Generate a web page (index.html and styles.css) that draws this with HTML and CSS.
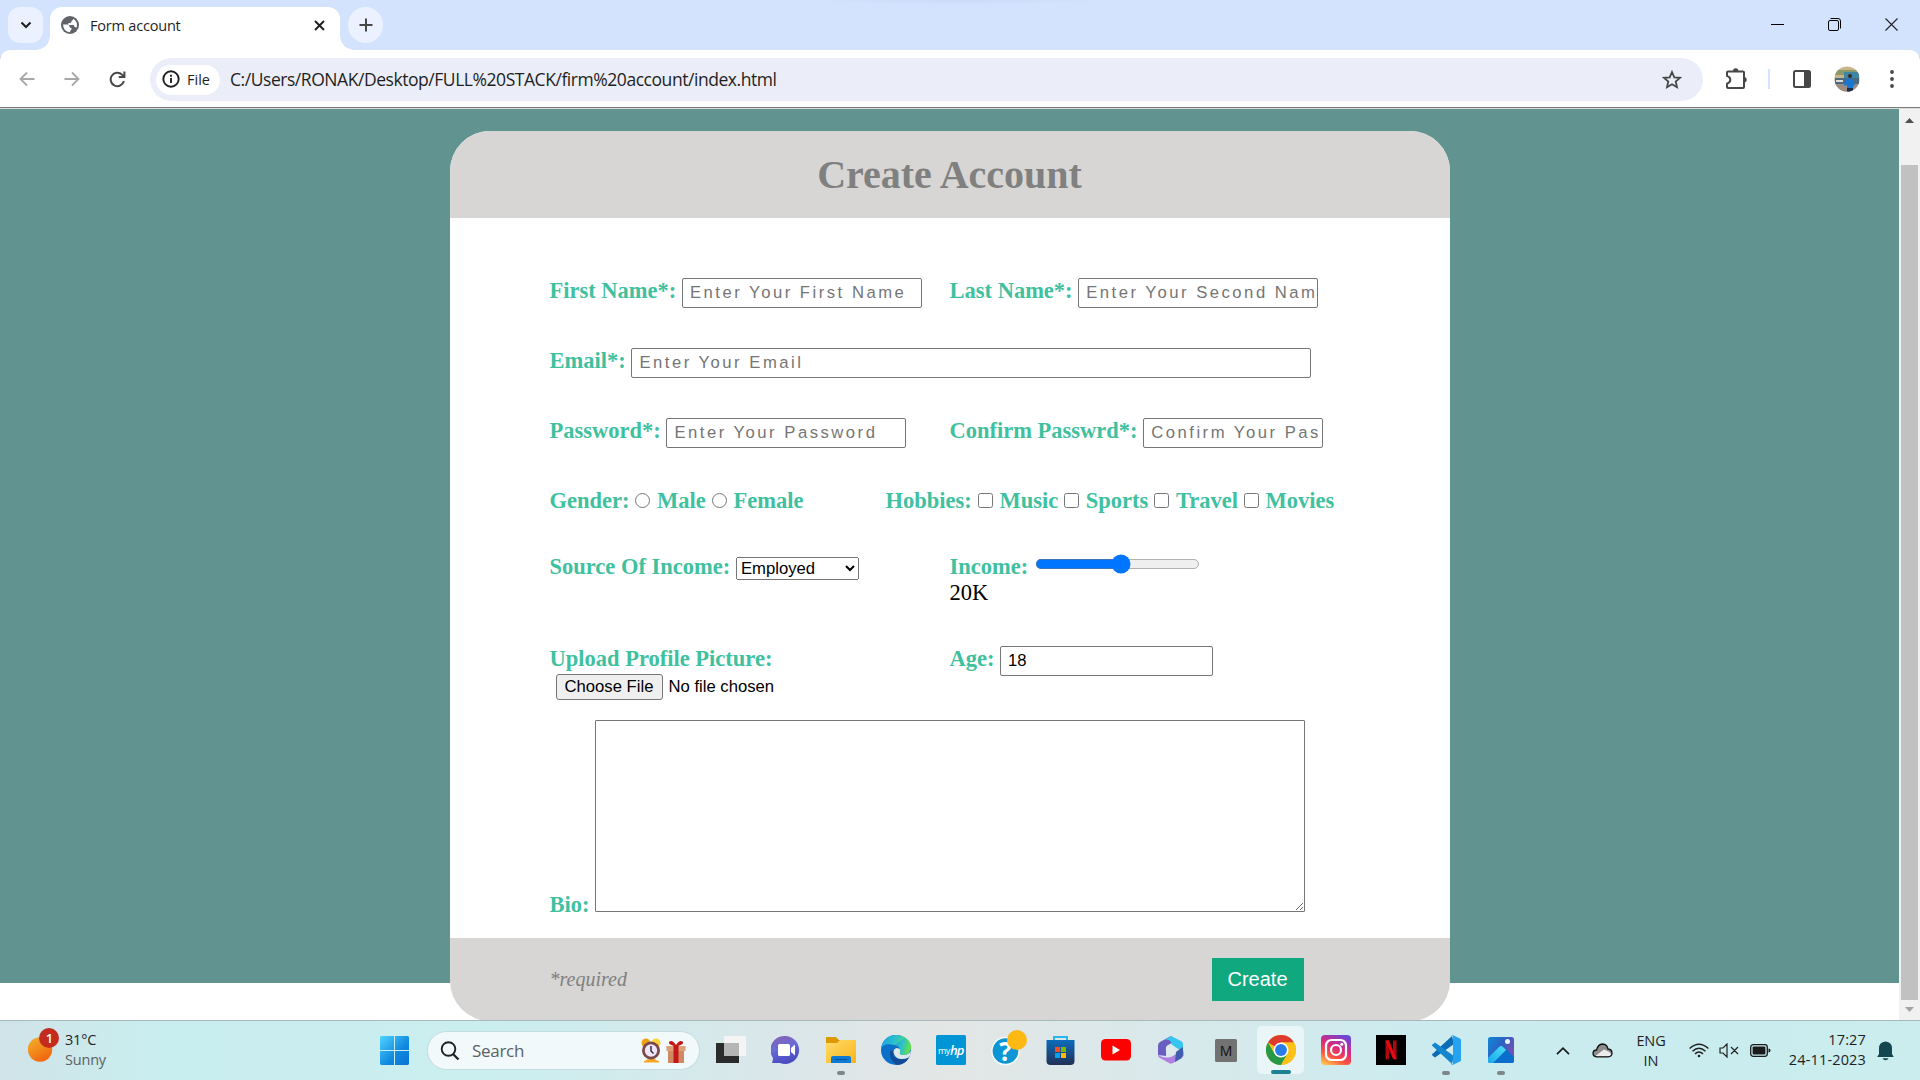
FILE: index.html
```html
<!DOCTYPE html>
<html lang="en">
<head>
<meta charset="utf-8">
<title>Form account</title>
<link rel="stylesheet" href="styles.css">
</head>
<body>
<div class="desktop">
  <header class="tabstrip">
    <div class="tab-search"><svg width="12" height="8" viewBox="0 0 12 8"><path d="M1.5 1.5 6 6l4.500-4.500" fill="none" stroke="#1f1f1f" stroke-width="2"/></svg></div>
    <div class="tab">
      <svg width="18" height="18" viewBox="0 0 18 18"><circle cx="9" cy="9" r="9" fill="#5f6368"/><path d="M2 8.500h4q2.500 0 2.500 2 0 1.500 2 1.500v1.500q-1.500.500-1.500 2.800Q2.500 15.500 2 8.500zM12 2.800Q16 5 16 9q0 1.500-.6 2.700-.5-.7-1.900-.7 0-2-1.500-2H8.500q-1.500 0-1.500-1T8.500 7q2 0 2-1.500T12 4z" fill="#fff"/></svg>
      <span class="tab-title">Form account</span>
      <svg class="tab-close" width="11" height="11" viewBox="0 0 11 11"><path d="M1 1l9 9M10 1l-9 9" stroke="#1f1f1f" stroke-width="1.900"/></svg>
    </div>
    <div class="new-tab"><svg width="14" height="14" viewBox="0 0 14 14"><path d="M7 .5v13M.5 7h13" stroke="#474747" stroke-width="2"/></svg></div>
    <div class="window-buttons">
      <svg width="13" height="13" viewBox="0 0 13 13"><path d="M0 6.500h13" stroke="#000"/></svg>
      <svg width="13" height="13" viewBox="0 0 13 13" fill="none" stroke="#000"><rect x=".5" y="2.500" width="10" height="10" rx="1.500"/><path d="M2.500.500H10Q12.500.500 12.500 3v7.500" /></svg>
      <svg width="13" height="13" viewBox="0 0 13 13"><path d="M.5.500l12 12M12.500.500l-12 12" stroke="#222" stroke-width="1.100"/></svg>
    </div>
  </header>

  <nav class="toolbar">
    <div class="nav-icons">
      <svg width="16" height="16" viewBox="0 0 16 16" fill="none" stroke="#a8a8a8" stroke-width="1.800"><path d="M15.500 8H2M8 1.500 1.500 8 8 14.500"/></svg>
      <svg width="16" height="16" viewBox="0 0 16 16" fill="none" stroke="#a8a8a8" stroke-width="1.800"><path d="M.5 8H14M8 1.500 14.500 8 8 14.500"/></svg>
      <svg width="17" height="17" viewBox="0 0 17 17" fill="none" stroke="#474747" stroke-width="2"><path d="M14.900 10A6.700 6.700 0 1 1 13 3.600L15 5.500"/><path d="M15.400.5V6H9.800"/></svg>
    </div>
    <div class="omnibox">
      <div class="file-chip">
        <svg width="18" height="18" viewBox="0 0 18 18"><circle cx="9" cy="9" r="7.700" fill="none" stroke="#1f1f1f" stroke-width="1.900"/><path d="M9 8v5M9 4.800v1.900" stroke="#1f1f1f" stroke-width="1.900"/></svg>
        <span class="chip-text">File</span>
      </div>
      <span class="url">C:/Users/RONAK/Desktop/FULL%20STACK/firm%20account/index.html</span>
      <svg class="star" width="20" height="20" viewBox="0 0 20 20"><path d="M10 2l2.300 5.300 5.700.5-4.300 3.800L15 17.200 10 14.200l-5 3 1.300-5.600L2 7.800l5.700-.5z" fill="none" stroke="#474747" stroke-width="1.800"/></svg>
    </div>
    <div class="actions">
      <svg width="22" height="22" viewBox="0 0 22 22"><path d="M3 3.500h15a1 1 0 0 1 1 1V19a1 1 0 0 1-1 1H3a1 1 0 0 1-1-1v-3.300q3.300-1 3.300-3.900T2 7.900V4.500a1 1 0 0 1 1-1z" fill="none" stroke="#474747" stroke-width="2"/><path d="M8 3a2.700 2.700 0 0 1 5.400 0zM19 9a2.700 2.700 0 0 1 0 5.400z" fill="#474747"/></svg>
      <span class="divider"></span>
      <svg class="side-panel" width="18" height="18" viewBox="0 0 18 18"><rect x="1" y="1" width="16" height="16" rx="1.500" fill="none" stroke="#474747" stroke-width="2"/><path d="M11 1h6v16h-6z" fill="#474747"/></svg>
      <svg class="avatar" width="26" height="26" viewBox="0 0 26 26"><clipPath id="face"><circle cx="13" cy="13" r="12.600"/></clipPath><g clip-path="url(#face)"><path fill="#c9b48c" d="M0 0h26v26H0z"/><path fill="#8c9a6a" d="M0 4h26v5H0z"/><path fill="#3f86a3" d="M10 6h15v8H10z"/><path fill="#4b6a80" d="M1 12h24v6H1z"/><path fill="#d9dde0" d="M2 14h7v2H2z"/><path fill="#9b8d80" d="M0 18h26v8H0z"/><path fill="#1b76d2" d="M11 14l4-2 4 2 2 5-2 1v3h-6v-4l-3 1z"/><path fill="#1c2c48" d="M13 22h6v4h-6z"/><circle cx="16" cy="10" r="2" fill="#3a2a26"/></g></svg>
      <svg class="menu-dots" width="4" height="18" viewBox="0 0 4 18" fill="#474747"><circle cx="2" cy="2" r="1.900"/><circle cx="2" cy="9" r="1.900"/><circle cx="2" cy="16" r="1.900"/></svg>
    </div>
  </nav>

  <div class="viewport">
    <main class="page">
      <form class="card" autocomplete="off">
        <h1 class="card-head">Create Account</h1>
        <div class="card-body">
          <div class="row">
            <div><label>First Name*:</label> <input class="text" type="text" placeholder="Enter Your First Name"></div>
            <div><label>Last Name*:</label> <input class="text" type="text" placeholder="Enter Your Second Name"></div>
          </div>
          <div class="row row-full">
            <div><label>Email*:</label> <input class="text text-wide" type="email" placeholder="Enter Your Email"></div>
          </div>
          <div class="row">
            <div><label>Password*:</label> <input class="text" type="password" placeholder="Enter Your Password"></div>
            <div><label>Confirm Passwrd*:</label> <input class="text text-short" type="password" placeholder="Confirm Your Password"></div>
          </div>
          <div class="row row-choices">
            <div><label>Gender:</label><input class="pick" type="radio" name="gender"> <label>Male</label><input class="pick" type="radio" name="gender"> <label>Female</label></div>
            <div><label>Hobbies:</label><input class="pick" type="checkbox"> <label>Music</label><input class="pick" type="checkbox"> <label>Sports</label><input class="pick" type="checkbox"> <label>Travel</label><input class="pick" type="checkbox"> <label>Movies</label></div>
          </div>
          <div class="row row-income">
            <div><label>Source Of Income:</label> <select class="source"><option>Employed</option></select></div>
            <div><label>Income:</label> <input class="range" type="range" min="0" max="100" value="52"><br>20K</div>
          </div>
          <div class="row row-upload">
            <div><label>Upload Profile Picture:</label><input class="file" type="file"></div>
            <div><label>Age:</label> <input class="text text-age" type="text" value="18"></div>
          </div>
          <div class="bio"><label>Bio:</label> <textarea class="bio-text"></textarea></div>
        </div>
        <div class="card-foot">
          <span class="required">*required</span>
          <button class="create" type="button">Create</button>
        </div>
      </form>
    </main>
    <aside class="scrollbar">
      <svg width="9" height="5" viewBox="0 0 9 5"><path d="M0 5 4.500 0 9 5z" fill="#505050"/></svg>
      <div class="thumb"></div>
      <svg width="9" height="5" viewBox="0 0 9 5"><path d="M0 0h9L4.500 5z" fill="#a3a3a3"/></svg>
    </aside>
  </div>

  <footer class="taskbar">
    <div class="weather">
      <svg width="32" height="36" viewBox="0 0 32 36"><defs><linearGradient id="sun" x1="0" y1="0" x2=".6" y2="1"><stop stop-color="#f0b62e"/><stop offset="1" stop-color="#f3650c"/></linearGradient></defs><circle cx="12" cy="21.500" r="12.200" fill="url(#sun)"/><circle cx="21" cy="10" r="10" fill="#c42b1c"/><text x="21.500" y="15" class="badge-text">1</text></svg>
      <div class="weather-text"><span>31°C</span><span class="muted">Sunny</span></div>
    </div>
    <svg class="start" width="29" height="29" viewBox="0 0 29 29"><defs><linearGradient id="win" x1="0" y1="0" x2="1" y2="1"><stop stop-color="#4fd4ff"/><stop offset=".6" stop-color="#0f88df"/><stop offset="1" stop-color="#0a74d0"/></linearGradient></defs><path d="M1 0h13v14H0V1zM15 0h13l1 1v13H15zM0 15h14v14H1l-1-1zM15 15h14v13l-1 1H15z" fill="url(#win)"/></svg>
    <div class="search">
      <svg width="20" height="20" viewBox="0 0 20 20"><circle cx="8.500" cy="8" r="6.800" fill="none" stroke="#222" stroke-width="1.900"/><path d="M13 13l5.500 5.500" stroke="#222" stroke-width="2.300"/></svg>
      <span class="search-text">Search</span>
      <svg width="46" height="26" viewBox="0 0 46 26"><circle cx="5" cy="5" r="4.500" fill="#e8a317"/><circle cx="15" cy="5" r="4.500" fill="#ffd33a"/><path d="M3 24q7-6 15 0z" fill="#f5a623" stroke="#f5a623"/><circle cx="10" cy="12.500" r="9" fill="#794848"/><circle cx="10" cy="12.500" r="6.200" fill="#efe4fb"/><path d="M10 8v5l2.500 2.500" fill="none" stroke="#333" stroke-width="1.500"/><path d="M27 11h16v14H27z" fill="#cf8a63"/><path d="M25.500 8h19v5h-19z" fill="#dda077"/><path d="M32.500 7h5v18h-5z" fill="#c51616"/><path d="M35 8q-8-1-7-4 3-3 7 3 4-6 7-3 1 3-7 4z" fill="#c51616"/></svg>
    </div>
    <div class="apps">
      <div class="app"><svg width="30" height="30" viewBox="0 0 30 30"><path d="M0 8h23v20H0z" fill="#2b2b2b"/><path d="M8 1h22v20H8z" fill="#f4f4f4"/><path d="M8 8h15v13H8z" fill="#b5b5b5"/></svg></div>
      <div class="app"><svg width="30" height="30" viewBox="0 0 30 30"><defs><linearGradient id="chat" x1="0" y1="0" x2=".3" y2="1"><stop stop-color="#8a62ae"/><stop offset=".5" stop-color="#6a6bd8"/><stop offset="1" stop-color="#4a4cc0"/></linearGradient></defs><path d="M15 1a14 14 0 1 1-6 27H1q1-3 1-5A14 14 0 0 1 15 1z" fill="url(#chat)"/><rect x="7" y="9" width="12" height="12" rx="1.500" fill="#fff"/><path d="M20 13l4-3.500v11L20 17z" fill="#fff"/></svg></div>
      <div class="app running"><svg width="30" height="30" viewBox="0 0 30 30"><defs><linearGradient id="fold" x1="0" y1="0" x2="1" y2="1"><stop stop-color="#ffdc6b"/><stop offset="1" stop-color="#f9b418"/></linearGradient></defs><path d="M0 2h10l3 3h17v8H0z" fill="#dd9a06"/><path d="M0 8h11l3-3h16v23H0z" fill="url(#fold)"/><path d="M5 28v-5q0-2 2-2h16q2 0 2 2v5z" fill="#0f7ad4"/><path d="M9 24.500h12" stroke="#0a4f9a"/></svg></div>
      <div class="app"><svg width="30" height="30" viewBox="0 0 30 30"><defs><linearGradient id="edge" x1="0" y1="0" x2="1" y2=".3"><stop stop-color="#1c9be0"/><stop offset=".5" stop-color="#2bc0cc"/><stop offset="1" stop-color="#63e04c"/></linearGradient></defs><circle cx="15" cy="15" r="15" fill="#0c6fc9"/><path d="M0 14C1 5 7 0 15 0c9 0 15 6 15 12 0 5-4 8-8 8-3 0-4-1-3-3 1-3-1-7-6-7C7 8 1 10 0 14z" fill="url(#edge)"/><path d="M9 17q-1 8 7 12.900 8 .1 12-7.400-6 3-12 1-5-2-4-8-2-.5-3 1.500z" fill="#124b96"/><path d="M27.500 22.500q-4 2-8 1.500-6-1-7-7 0-3 3-4 5 .5 3.700 4-1 3 3.800 3 4 0 7-4 0 4-2.500 6.500z" fill="#dfe8e9"/><path d="M30 12c0 5-4 8-8 8-3 0-4-1-3-3 1-3-1-7-5-7.500L24 3q6 4 6 9z" fill="url(#edge)"/></svg></div>
      <div class="app"><svg width="30" height="30" viewBox="0 0 30 30"><rect width="30" height="30" rx="1.500" fill="#0096d6"/><text x="2" y="18.500" class="hp-my">my</text><text x="14" y="20" class="hp-hp">hp</text></svg></div>
      <div class="app"><svg class="help" width="36" height="36" viewBox="0 0 36 36"><circle cx="14.500" cy="21" r="13.600" fill="#0c96d4" stroke="#f3f9fa" stroke-width="1.500"/><text x="14.500" y="30.500" class="help-mark">?</text><circle cx="26" cy="10" r="10" fill="#fdb913"/></svg></div>
      <div class="app"><svg width="30" height="30" viewBox="0 0 30 30"><defs><linearGradient id="store" x1="0" y1="0" x2="0" y2="1"><stop stop-color="#0d6cbc"/><stop offset="1" stop-color="#213055"/></linearGradient></defs><path d="M8 7V2h13v5" fill="none" stroke="#29b6ef" stroke-width="2"/><path d="M.5 5h28v21q0 4-4 4h-20q-4 0-4-4z" fill="url(#store)"/><path d="M9 12h5v5H9z" fill="#f25022"/><path d="M15 12h5v5h-5z" fill="#7fba00"/><path d="M9 18h5v5H9z" fill="#00a4ef"/><path d="M15 18h5v5h-5z" fill="#ffb900"/></svg></div>
      <div class="app"><svg width="30" height="22" viewBox="0 0 30 22"><rect width="30" height="21.500" rx="4.500" fill="#fe0000"/><path d="M11.500 6.500v9l7.500-4.500z" fill="#fff"/></svg></div>
      <div class="app"><svg width="28" height="30" viewBox="0 0 28 30"><path d="M14 1 3 7Q1 8 1 11v9l8 1v-8q0-2 2-3l8-4z" fill="#6a5fc0"/><path d="M14 1 8 5q6-1 7 5l8 5q3 2 3-1V9q0-2-2-3z" fill="#35c5ef"/><path d="M1 19q0 3 2 4l9 5q2 1 4 0l9-5q3-3 1-8-1 2-3 2l-9 5Q5 24 1 19z" fill="#b07fe0"/><path d="M26 12v6q0 4-3 6l-5 3 1-10 4-3z" fill="#3f5dae"/><circle cx="13.500" cy="14.500" r="4.700" fill="#dfeaea"/></svg></div>
      <div class="app"><svg width="22" height="23" viewBox="0 0 22 23"><rect width="22" height="23" rx="1.500" fill="#727272"/><text x="11" y="17" class="m-mark">M</text></svg></div>
      <div class="app running active"><svg width="30" height="30" viewBox="0 0 48 48"><circle cx="24" cy="24" r="24" fill="#fbc116"/><path d="M24 24 3.200 12A24 24 0 0 1 44.800 12H24z" fill="#de3b2f"/><path d="M3.200 12A24 24 0 0 0 24 48l10.400-18L24 24 13.600 30z" fill="#279847"/><path d="M24 12h20.800A24 24 0 0 1 24 48l10.400-18z" fill="#fbc116"/><circle cx="24" cy="24" r="12" fill="#fff"/><circle cx="24" cy="24" r="9.500" fill="#2a7de9"/></svg></div>
      <div class="app"><svg width="30" height="30" viewBox="0 0 30 30"><defs><linearGradient id="ig" x1=".2" y1="1" x2=".7" y2="0"><stop stop-color="#fdc04e"/><stop offset=".3" stop-color="#fb5240"/><stop offset=".6" stop-color="#d82a7e"/><stop offset="1" stop-color="#6e45d6"/></linearGradient></defs><rect width="30" height="30" rx="4" fill="url(#ig)"/><g fill="none" stroke="#fff" stroke-width="2.200"><rect x="5" y="5" width="20" height="20" rx="5.500"/><circle cx="15" cy="15" r="5"/></g><circle cx="20.800" cy="9.200" r="1.500" fill="#fff"/></svg></div>
      <div class="app"><svg width="30" height="30" viewBox="0 0 30 30"><path d="M0 0h30v30H0z"/><path d="M9.500 5.500H13V24l-3.500.5zM17 5.500h3.500v19L17 24z" fill="#b1060f"/><path d="M9.500 5.500H13l7.500 19L17 24z" fill="#e50914"/></svg></div>
      <div class="app running"><svg width="30" height="30" viewBox="0 0 30 30"><path d="M21 1 2 18.500q-2 1 0 2.500l2 1.500L23 9z" fill="#0b6bb5"/><path d="M21 29 2 11.500q-2-1 0-2.500l2-1.500L23 21z" fill="#1486d0"/><path d="M21.500 0 29 3.500q1 .5 1 1.500v20q0 1-1 1.500L21.500 30q-1 0-1.500-1 2 1 2-1V2q0-2-2-1z" fill="#26a3f0"/></svg></div>
      <div class="app running"><svg width="26" height="26" viewBox="0 0 26 26"><defs><linearGradient id="ph" x1="0" y1="0" x2="1" y2=".6"><stop stop-color="#1187d8"/><stop offset=".5" stop-color="#2c62c4"/><stop offset="1" stop-color="#7b4fae"/></linearGradient><linearGradient id="hill" x1="0" y1="1" x2="1" y2="0"><stop stop-color="#19a7e8"/><stop offset="1" stop-color="#4be0fb"/></linearGradient></defs><rect width="26" height="26" rx="2.500" fill="url(#ph)"/><path d="M4 25 15 13q2-2 4 0l7 7v4q0 2-2 2H4z" fill="#0a6fcb"/><path d="M0 21 11 10q2-2 4 0l3 3L5 26H2q-2 0-2-2z" fill="url(#hill)"/><circle cx="19.500" cy="4.500" r="2.500" fill="#eaf3ff"/></svg></div>
    </div>
    <div class="tray">
      <svg width="14" height="8" viewBox="0 0 14 8"><path d="M1 7.200 7 1.200l6 6" fill="none" stroke="#1b1b1b" stroke-width="1.700"/></svg>
      <svg class="cloud" width="21" height="15" viewBox="0 0 21 15"><path d="M4.500 13.800Q1 13.500 1 10.300 1.200 7.200 4.500 7 6 1.200 10.500 1q4.500.2 5.500 5 4 .2 4 4.200-.2 3.400-3.800 3.600z" fill="#8d8d8d"/><path d="M3 13.300 12 6.500q4 1 7.500 4.500-1 2.300-3 2.300z" fill="#ececec"/><path d="M4.500 13.800Q1 13.500 1 10.300 1.200 7.200 4.500 7 6 1.200 10.500 1q4.500.2 5.500 5 4 .2 4 4.200-.2 3.400-3.800 3.600z" fill="none" stroke="#111" stroke-width="1.300"/></svg>
      <div class="lang"><span>ENG</span><span>IN</span></div>
      <svg class="wifi" width="20" height="15" viewBox="0 0 20 15" fill="none" stroke="#222" stroke-width="1.500"><path d="M.6 5.500q9.400-8.600 18.800 0M3.500 8.200q6.500-6 13 0M6 10.900q4-3.700 8 0"/><circle cx="10" cy="13" r="1.300" fill="#222" stroke="none"/></svg>
      <svg class="mute" width="20" height="15" viewBox="0 0 20 15" fill="none" stroke="#222" stroke-width="1.200"><path d="M1 5h3l4-4v13l-4-4H1zM12 4l7 7M19 4l-7 7"/></svg>
      <svg class="battery" width="21" height="13" viewBox="0 0 21 13"><rect x=".7" y=".7" width="16.600" height="11.600" rx="2.500" fill="none" stroke="#1b1b1b" stroke-width="1.300"/><rect x="2.600" y="2.600" width="12.800" height="7.800" rx="1" fill="#1b1b1b"/><path d="M18.500 4.500q2 0 2 2t-2 2z" fill="#1b1b1b"/></svg>
      <div class="clock"><span>17:27</span><span>24-11-2023</span></div>
      <svg class="bell" width="17" height="20" viewBox="0 0 17 20"><path d="M8.500.500Q15 1 15 7.500V13l1.800 3H.2L2 13V7.500Q2 1 8.500.500zM5.500 17.200h6q-.8 2-3 2t-3-2z" fill="#134650"/></svg>
    </div>
  </footer>
</div>
</body>
</html>
```

FILE: styles.css
```css
* { box-sizing: border-box; }
body { margin: 0; overflow: hidden; }
svg { display: block; flex: none; }

.desktop {
  width: 1920px;
  height: 1080px;
  display: flex;
  flex-direction: column;
  background: #d3e2fd;
  font-family: "Open Sans", "Noto Sans", sans-serif;
  color: #1f1f1f;
}

/* Tab strip */
.tabstrip {
  height: 50px;
  padding: 7px 22px 0 8px;
  display: flex;
  background: radial-gradient(ellipse 150px 5px at 960px 0, #cbdcf8, #d3e2fd);
}
.tab-search, .new-tab {
  width: 35px;
  height: 36px;
  display: flex;
  align-items: center;
  justify-content: center;
  background: #ebf1fe;
}
.tab-search { border-radius: 12px; }
.new-tab { border-radius: 18px; margin-left: 8px; }
.tab {
  position: relative;
  width: 290px;
  height: 43px;
  margin-left: 7px;
  padding: 0 15px 7px 11px;
  display: flex;
  align-items: center;
  background: #fff;
  border-radius: 12px 12px 0 0;
}
.tab::before, .tab::after {
  content: "";
  position: absolute;
  bottom: 0;
  width: 14px;
  height: 14px;
}
.tab::before { left: -14px; background: radial-gradient(circle at 0 0, transparent 13.500px, #fff 14px); }
.tab::after { right: -14px; background: radial-gradient(circle at 100% 0, transparent 13.500px, #fff 14px); }
.tab-title { margin-left: 11px; font-size: 14.500px; letter-spacing: -0.2px; white-space: nowrap; }
.tab-close { margin-left: auto; }
.window-buttons {
  height: 34px;
  margin-left: auto;
  display: flex;
  align-items: center;
  gap: 44px;
}

/* Toolbar */
.toolbar {
  height: 59px;
  padding: 8px 26px 0 19px;
  display: flex;
  background: #fff;
  border-bottom: 1px solid #dcdcdc;
  border-radius: 10px 10px 0 0;
  box-shadow: inset 0 -1px #7b7b7b;
}
.nav-icons { width: 131px; height: 42px; display: flex; align-items: center; gap: 29px; }
.omnibox {
  width: 1553px;
  height: 43px;
  padding: 0 21px 0 6px;
  display: flex;
  align-items: center;
  background: #ebeef8;
  border-radius: 22px;
}
.file-chip {
  width: 64px;
  height: 30px;
  padding: 0 0 1px 6px;
  display: flex;
  align-items: center;
  background: #fff;
  border-radius: 15px;
}
.chip-text { margin-left: 7px; font-size: 14.500px; }
.url { margin: 0 0 2px 10px; font-size: 17.500px; letter-spacing: -0.450px; white-space: nowrap; }
.star { margin-left: auto; }
.actions { height: 42px; flex: 1; padding-left: 22px; display: flex; align-items: center; }
.divider { width: 2px; height: 20px; margin-left: 21px; background: #d3e2fd; }
.side-panel { margin-left: 23px; }
.avatar { margin-left: 23px; }
.menu-dots { margin-left: auto; }

/* Page viewport */
.viewport { height: 911px; display: flex; overflow: hidden; }
.page {
  width: 1899px;
  padding-top: 22px;
  background: linear-gradient(#619390 874px, #fff 874px);
  font: 22.500px "Liberation Serif", "Times New Roman", serif;
  color: #000;
}
.card {
  width: 1000px;
  height: 890px;
  margin: 0 auto;
  background: #fff;
  border-radius: 40px;
  overflow: hidden;
}
.card-head {
  height: 87px;
  margin: 0;
  font-size: 40px;
  line-height: 87px;
  text-align: center;
  color: #808080;
  background: #d7d6d4;
}
.card-body { height: 720px; padding: 60px 100px 0; }
.row { height: 30px; margin-bottom: 40px; display: grid; grid-template-columns: 400px 400px; white-space: nowrap; }
.row-full { grid-template-columns: 800px; }
.row-choices { height: 26px; grid-template-columns: 336px 464px; }
.row-income { height: 52px; }
.row-upload { height: 54px; margin-bottom: 20px; }
label { font-weight: 700; color: #3fc1a0; }

.text {
  width: 240px;
  height: 30px;
  padding: 0 2px 0 7px;
  font: 16.667px "Liberation Sans", Arial, sans-serif;
  letter-spacing: 2.500px;
  border: 1px solid #767676;
  border-radius: 2px;
}
.text::placeholder { color: #757575; }
.text-wide { width: 680px; }
.text-short { width: 180px; padding-right: 4px; }
.text-age { width: 213px; letter-spacing: 0; }
.pick { width: 15px; height: 15px; margin: 0 1px 0 6px; }
.source { width: 123px; height: 23px; font: 16.667px "Liberation Sans", Arial, sans-serif; }
.range { width: 132px; height: 16px; margin: 0 2px 0 1px; zoom: 1.25; }
.file { display: block; margin: 2px 0 0 6px; font: 16.667px "Liberation Sans", Arial, sans-serif; }
.file::file-selector-button {
  width: 107px;
  height: 26px;
  margin-right: 6px;
  padding: 0;
  font: inherit;
  color: #000;
  background: #efefef;
  border: 1px solid #767676;
  border-radius: 3px;
}
.bio { white-space: nowrap; line-height: 26px; }
.bio-text { width: 710px; height: 192px; border: 1px solid #767676; border-radius: 1px; }

.card-foot {
  height: 83px;
  padding: 0 146px 0 100px;
  display: flex;
  align-items: center;
  justify-content: space-between;
  background: #d7d6d4;
}
.required { font-size: 20px; font-style: italic; color: #808080; }
.create {
  width: 92px;
  height: 43px;
  padding: 0;
  font: 20px "Liberation Sans", Arial, sans-serif;
  color: #fff;
  background: #10a97f;
  border: 0;
}

.scrollbar {
  width: 21px;
  padding: 9px 0 8px;
  display: flex;
  flex-direction: column;
  align-items: center;
  background: #f1f1f1;
}
.thumb { width: 17px; height: 835px; margin: 42px 0 7px; background: #c1c1c1; }

/* Taskbar */
.taskbar {
  height: 60px;
  display: flex;
  align-items: center;
  border-top: 1px solid #a7b9bd;
  background: linear-gradient(90deg, #d0e3e8 0, #c9eeef 160px, #cbeeef 500px, #d9e7ea 760px, #e3e6e5 940px, #dbe8ea 1120px, #cdebee 1400px, #c9ecee 1700px, #cbedee 1920px);
}
.weather { width: 380px; padding: 0 0 2px 28px; display: flex; align-items: center; gap: 5px; }
.weather svg { margin-bottom: 7px; }
.weather-text { display: flex; flex-direction: column; font-size: 14.500px; line-height: 20px; letter-spacing: -0.2px; }
.muted, .search-text { color: #5b6264; }
.badge-text { font: 600 13px "Open Sans", sans-serif; fill: #fff; text-anchor: middle; }
.start { margin-right: 18px; }
.search {
  width: 273px;
  height: 39px;
  padding: 0 12px 0 12px;
  display: flex;
  align-items: center;
  background: #f1f9fa;
  border: 1px solid #c3dcdf;
  border-radius: 20px;
}
.search-text { flex: 1; margin-left: 12px; font-size: 17px; letter-spacing: -0.3px; }
.apps { margin-left: 3px; padding-bottom: 1px; display: flex; height: 59px; }
.app { position: relative; width: 55px; display: flex; align-items: center; justify-content: center; }
.app.active { width: 47px; height: 48px; margin: 5px 4px; background: #e9f5f7; border-radius: 5px; }
.help { margin: 0 0 5px 6px; }
.running::after {
  content: "";
  position: absolute;
  bottom: 4px;
  width: 8px;
  height: 4px;
  border-radius: 2px;
  background: #7b8788;
}
.active::after { bottom: 0; width: 20px; background: #1c8193; }
.hp-my { font: 9px "Open Sans", sans-serif; fill: #fff; letter-spacing: -0.5px; }
.hp-hp { font: italic 600 13px "Open Sans", sans-serif; fill: #fff; letter-spacing: -1px; }
.help-mark { font: 700 26px "Open Sans", sans-serif; fill: #fff; text-anchor: middle; }
.m-mark { font: 14px "Open Sans", sans-serif; fill: #111; text-anchor: middle; }

.tray { flex: 1; padding: 0 26px 0 28px; display: flex; align-items: center; font-size: 14.500px; line-height: 20px; }
.cloud { margin-left: 22px; }
.lang { width: 40px; margin-left: 18px; display: flex; flex-direction: column; align-items: center; letter-spacing: -0.1px; }
.wifi { margin-left: 18px; }
.mute { margin-left: 10px; }
.battery { margin-left: 11px; }
.clock { margin: -2px 0 0 auto; display: flex; flex-direction: column; align-items: flex-end; letter-spacing: 0.150px; }
.bell { margin-left: 11px; }
```
